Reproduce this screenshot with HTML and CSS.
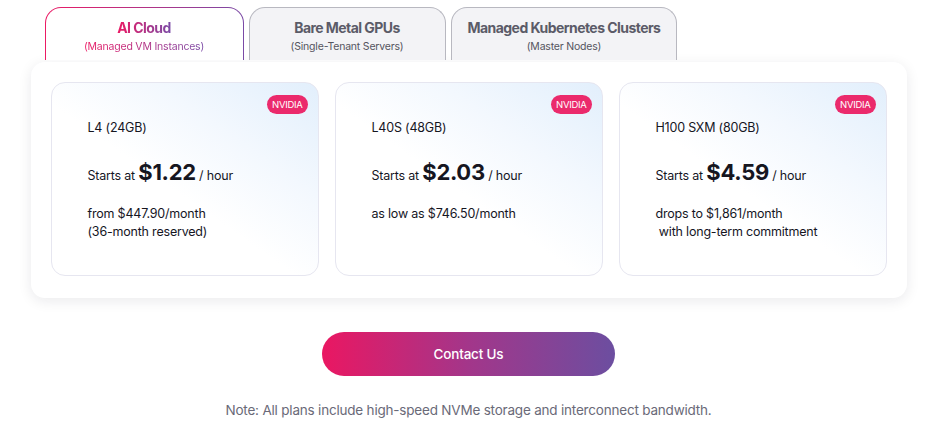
FILE: index.html
```html
<!DOCTYPE html>
<html lang="en">
<head>
<meta charset="utf-8">
<title>GPU Pricing</title>
<link rel="stylesheet" href="styles.css">
</head>
<body>
<div class="wrap">
  <div class="tabs">
    <div class="tab active">
      <div class="tab-title">AI Cloud</div>
      <div class="tab-sub">(Managed VM Instances)</div>
    </div>
    <div class="tab">
      <div class="tab-title">Bare Metal GPUs</div>
      <div class="tab-sub">(Single-Tenant Servers)</div>
    </div>
    <div class="tab">
      <div class="tab-title">Managed Kubernetes Clusters</div>
      <div class="tab-sub">(Master Nodes)</div>
    </div>
  </div>
  <div class="panel">
    <div class="card">
      <span class="badge">NVIDIA</span>
      <div class="gpu">L4 (24GB)</div>
      <div class="price-line">Starts at <span class="price">$1.22</span> <span class="unit">/ hour</span></div>
      <div class="detail">from $447.90/month<br>(36-month reserved)</div>
    </div>
    <div class="card">
      <span class="badge">NVIDIA</span>
      <div class="gpu">L40S (48GB)</div>
      <div class="price-line">Starts at <span class="price">$2.03</span> <span class="unit">/ hour</span></div>
      <div class="detail">as low as $746.50/month</div>
    </div>
    <div class="card">
      <span class="badge">NVIDIA</span>
      <div class="gpu">H100 SXM (80GB)</div>
      <div class="price-line">Starts at <span class="price">$4.59</span> <span class="unit">/ hour</span></div>
      <div class="detail">drops to $1,861/month<br>&nbsp;with long-term commitment</div>
    </div>
  </div>
  <div class="cta">
    <button class="btn">Contact Us</button>
  </div>
  <p class="note">Note: All plans include high-speed NVMe storage and interconnect bandwidth.</p>
</div>
</body>
</html>
```

FILE: styles.css
```css
* { box-sizing: border-box; }
html, body { margin: 0; padding: 0; background: #ffffff; }
body {
  font-family: Inter, "Noto Sans", "Liberation Sans", sans-serif;
  color: #16161f;
}
.wrap {
  width: 876px;
  margin: 0 auto;
  padding-top: 7px;
}
.tabs {
  display: flex;
  gap: 5px;
  padding-left: 14px;
  height: 53px;
}
.tab {
  display: flex;
  flex-direction: column;
  align-items: center;
  min-width: 197px;
  padding: 10px 16px 0;
  border: 1px solid #b8b8c0;
  border-bottom: none;
  border-radius: 16px 16px 0 0;
  background: #f3f3f6;
}
.tab.active {
  min-width: 199px;
  border: 1.5px solid transparent;
  border-bottom: none;
  background: linear-gradient(#fff, #fff) padding-box,
              linear-gradient(90deg, #ec1a64, #7a4aa6) border-box;
}
.tab-title {
  font-size: 14px;
  font-weight: 700;
  color: #5b5b68;
  letter-spacing: -0.55px;
  line-height: 20px;
}
.tab-sub {
  font-size: 10.5px;
  color: #55555f;
  line-height: 14px;
  margin-top: 2px;
  letter-spacing: -0.2px;
}
.tab.active .tab-title,
.tab.active .tab-sub {
  background: linear-gradient(90deg, #ec1a64, #7a4aa6);
  -webkit-background-clip: text;
  background-clip: text;
  color: transparent;
}

.panel {
  margin-top: 2px;
  display: grid;
  grid-template-columns: repeat(3, 268px);
  gap: 16px;
  padding: 20px 20px 22px;
  background: #fff;
  border-radius: 14px;
  box-shadow: 0 3px 14px rgba(20, 20, 40, 0.09);
}
.card {
  position: relative;
  height: 194px;
  border: 1px solid #e6e6f0;
  border-radius: 14px;
  padding: 37px 20px 0 36px;
  background: linear-gradient(215deg, #e2effc 0%, #f3f8fe 30%, #ffffff 55%);
}
.badge {
  position: absolute;
  top: 12px;
  right: 10px;
  height: 19px;
  padding: 0 5px;
  border-radius: 10px;
  background: #eb2a6c;
  color: #fff;
  font-size: 9.5px;
  line-height: 19px;
  letter-spacing: -0.3px;
}
.gpu {
  font-size: 12.5px;
  line-height: 16px;
  letter-spacing: -0.2px;
}
.price-line {
  margin-top: 21px;
  font-size: 12.5px;
  letter-spacing: -0.2px;
  line-height: 30px;
}
.price {
  font-size: 22px;
  font-weight: 700;
  letter-spacing: -0.3px;
}
.detail {
  margin-top: 14px;
  font-size: 12.5px;
  line-height: 18px;
  letter-spacing: -0.2px;
}
.cta {
  display: flex;
  justify-content: center;
  margin-top: 34px;
}
.btn {
  width: 293px;
  height: 44px;
  border: none;
  border-radius: 22px;
  background: linear-gradient(90deg, #ea1762, #a3368a 50%, #6c4ea0);
  color: #fff;
  font-family: inherit;
  font-size: 13.5px;
  font-weight: 500;
  letter-spacing: -0.2px;
}
.note {
  margin: 25px 0 0;
  text-align: center;
  font-size: 13.5px;
  color: #6a6a78;
  letter-spacing: -0.2px;
  line-height: 18px;
}
```
